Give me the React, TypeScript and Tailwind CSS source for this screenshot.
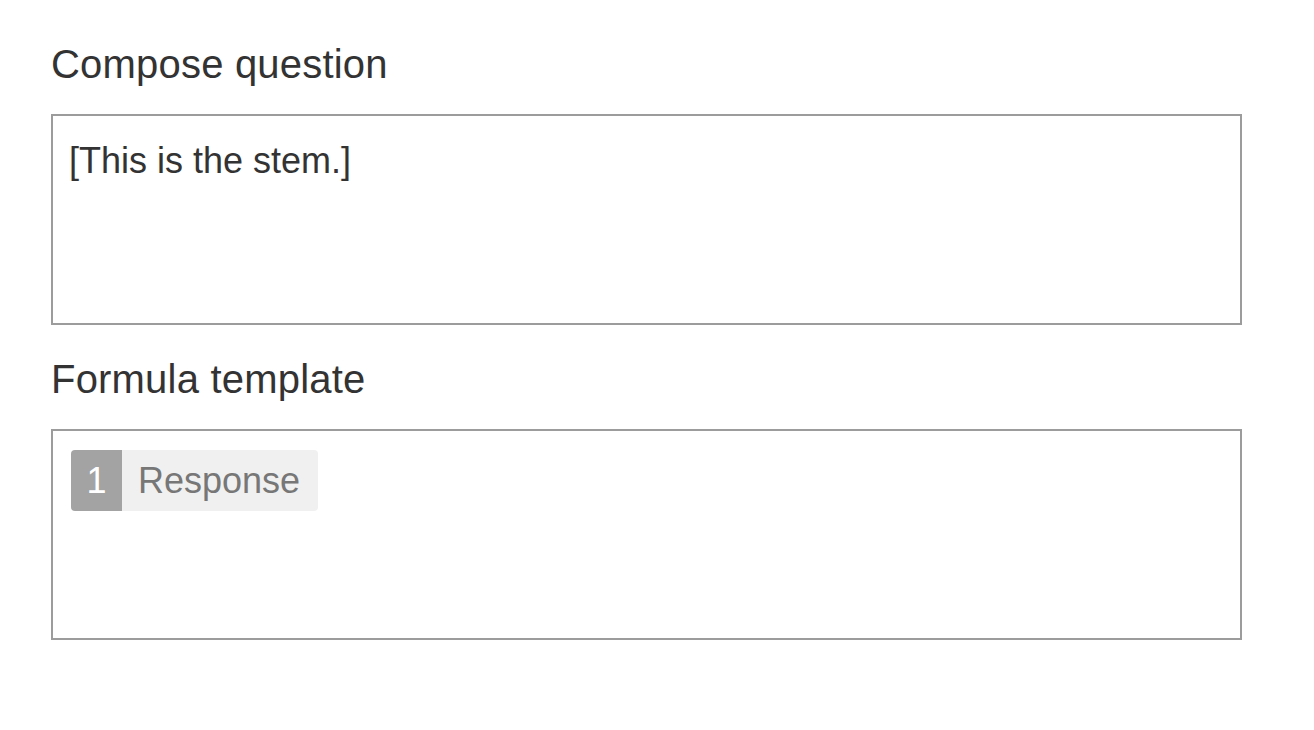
const FONT = { fontFamily: '"Liberation Sans", Arial, Helvetica, sans-serif' };

export default function App() {
  return (
    <div className="min-h-screen bg-white pl-[51px] pr-[72px] pt-[42px] text-[#333333]" style={FONT}>
      <div className="text-[40px] leading-[44px] tracking-[0.2px]">Compose question</div>
      <div className="mt-[28px] h-[211px] border-2 border-[#9c9c9c] pl-[16px] pt-[24px]">
        <div className="text-[36px] leading-[42px]">[This is the stem.]</div>
      </div>

      <div className="mt-[32px] text-[40px] leading-[44px] tracking-[0.2px]">Formula template</div>
      <div className="mt-[28px] h-[211px] border-2 border-[#9c9c9c] pl-[18px] pt-[19px]">
        <div className="inline-flex h-[61px] items-stretch overflow-hidden rounded-[4px]">
          <span className="flex w-[51px] items-center justify-center bg-[#a3a3a3] text-[36px] text-white">1</span>
          <span className="flex items-center bg-[#f0f0f0] pl-[16px] pr-[18px] text-[36px] text-[#777777]">Response</span>
        </div>
      </div>
    </div>
  );
}
